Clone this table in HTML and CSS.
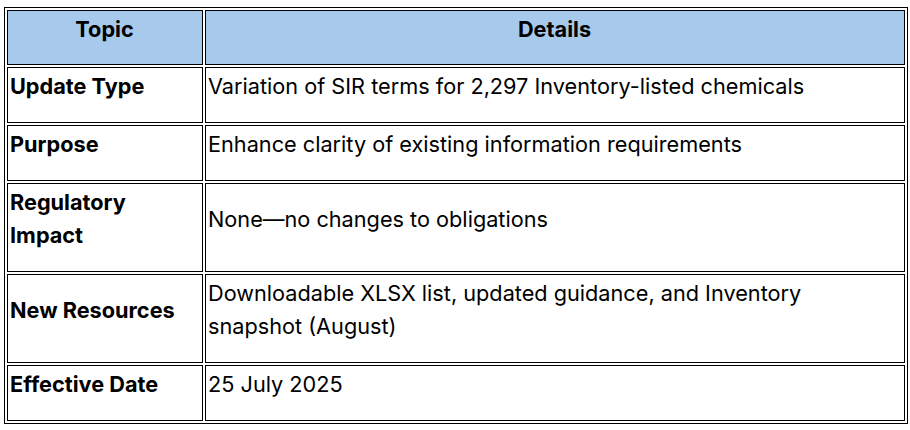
FILE: index.html
```html
<!DOCTYPE html>
<html>
<head>
<meta charset="utf-8">
<link rel="stylesheet" href="styles.css">
</head>
<body>
<table class="info">
  <thead>
    <tr><th class="c1">Topic</th><th class="c2">Details</th></tr>
  </thead>
  <tbody>
    <tr><td class="c1 key">Update Type</td><td class="c2">Variation of SIR terms for 2,297 Inventory-listed chemicals</td></tr>
    <tr><td class="c1 key">Purpose</td><td class="c2">Enhance clarity of existing information requirements</td></tr>
    <tr><td class="c1 key">Regulatory Impact</td><td class="c2">None—no changes to obligations</td></tr>
    <tr><td class="c1 key">New Resources</td><td class="c2">Downloadable XLSX list, updated guidance, and Inventory snapshot (August)</td></tr>
    <tr><td class="c1 key">Effective Date</td><td class="c2">25 July 2025</td></tr>
  </tbody>
</table>
</body>
</html>
```
FILE: styles.css
```css
html, body {
  margin: 0;
  padding: 0;
  background: #ffffff;
}
body {
  padding: 7px 0 0 4px;
  font-family: Inter, "Liberation Sans", Arial, sans-serif;
  font-size: 21.7px;
  color: #000000;
}
.info {
  border: 1px solid #000000;
  border-collapse: separate;
  border-spacing: 2px;
  width: 902px;
  table-layout: fixed;
}
.info th, .info td {
  border: 1px solid #000000;
  padding: 2px 3px 19px 2px;
  line-height: 33px;
  vertical-align: middle;
  text-align: left;
  font-weight: normal;
}
.info th {
  background: #a6c9ec;
  text-align: center;
  font-weight: bold;
  padding-bottom: 18px;
}
.info .c1 { width: 189px; }
.info .c2 { width: 693px; }
.info .key { font-weight: bold; }
```
